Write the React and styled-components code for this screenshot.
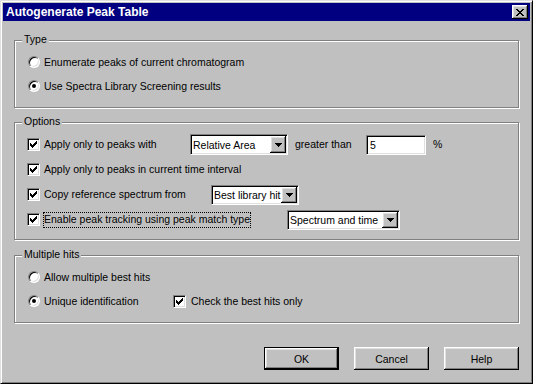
import styled, { createGlobalStyle } from 'styled-components'

const GlobalStyle = createGlobalStyle`
  html, body {
    margin: 0;
    background: #c0c0c0;
  }
  body {
    font-family: "Liberation Sans", Arial, sans-serif;
    font-size: 10.5px;
    color: #000;
  }
`

const raised = `
  box-shadow: inset -1px -1px #000, inset 1px 1px #fff,
    inset -2px -2px #808080, inset 2px 2px #dfdfdf;
`

const sunken = `
  border: 1px solid;
  border-color: #808080 #fff #fff #808080;
  box-shadow: inset 1px 1px #000, inset -1px -1px #dfdfdf;
`

const Dialog = styled.div`
  width: 533px;
  height: 384px;
  box-sizing: border-box;
  display: flex;
  flex-direction: column;
  padding: 2px;
  background: #c0c0c0;
  border: 1px solid;
  border-color: #dfdfdf #000 #000 #dfdfdf;
  box-shadow: inset 1px 1px #fff, inset -1px -1px #808080;
`

const TitleBar = styled.div`
  height: 18px;
  flex-shrink: 0;
  display: flex;
  align-items: center;
  justify-content: space-between;
  padding: 0 2px 0 3px;
  background: #000080;
  color: #fff;
  font-weight: bold;
  font-size: 12px;
`

const CloseButton = styled.div`
  width: 16px;
  height: 14px;
  display: flex;
  align-items: center;
  justify-content: center;
  background: #c0c0c0;
  ${raised}
`

const Body = styled.div`
  flex: 1;
  display: flex;
  flex-direction: column;
  padding: 19px 11px 0 11px;
`

const Group = styled.div`
  position: relative;
  border: 1px solid #808080;
  box-shadow: 1px 1px 0 #fff, inset 1px 1px 0 #fff;
  padding: 9px 12px ${(p) => p.$pb || 9}px;
  margin-top: ${(p) => p.$mt || 0}px;
`

const Legend = styled.span`
  position: absolute;
  top: -8px;
  left: 7px;
  padding: 0 2px;
  line-height: 13px;
  background: #c0c0c0;
`

const Row = styled.div`
  display: flex;
  align-items: center;
  height: ${(p) => p.$h || 24}px;
`

const Box = styled.div`
  width: 13px;
  height: 13px;
  box-sizing: border-box;
  flex-shrink: 0;
  display: flex;
  align-items: center;
  justify-content: center;
  margin-right: ${(p) => p.$gap || 4}px;
  background: #fff;
  ${sunken}
`

const Circle = styled.div`
  width: 12px;
  height: 12px;
  box-sizing: border-box;
  flex-shrink: 0;
  display: flex;
  align-items: center;
  justify-content: center;
  margin: 0 4px 0 1px;
  border-radius: 50%;
  background: #fff;
  ${sunken}
`

const Dot = styled.div`
  width: 4px;
  height: 4px;
  border-radius: 50%;
  background: #000;
`

const Caption = styled.span`
  flex-shrink: 0;
  width: ${(p) => (p.$width ? `${p.$width}px` : 'auto')};
  margin-left: ${(p) => p.$ml || 0}px;
  line-height: 13px;
  white-space: nowrap;
`

const Focus = styled.span`
  display: inline-block;
  margin-left: -1px;
  padding: 1px 1px 2px 1px;
  outline: 1px dotted #000;
  outline-offset: -1px;
`

const Select = styled.div`
  width: ${(p) => p.$w}px;
  height: ${(p) => p.$h || 20}px;
  box-sizing: border-box;
  flex-shrink: 0;
  display: flex;
  padding: 1px;
  background: #fff;
  ${sunken}
`

const SelectValue = styled.span`
  flex: 1;
  display: flex;
  align-items: center;
  padding-left: 1px;
  white-space: nowrap;
  overflow: hidden;
`

const DropButton = styled.div`
  width: 16px;
  flex-shrink: 0;
  display: flex;
  align-items: center;
  justify-content: center;
  background: #c0c0c0;
  ${raised}
`

const TextField = styled.div`
  width: 60px;
  height: 20px;
  box-sizing: border-box;
  flex-shrink: 0;
  display: flex;
  align-items: center;
  padding-left: 3px;
  background: #fff;
  ${sunken}
`

const ButtonRow = styled.div`
  display: flex;
  justify-content: flex-end;
  gap: 15px;
  margin-top: 24px;
`

const Button = styled.div`
  width: 75px;
  height: 23px;
  box-sizing: border-box;
  display: flex;
  align-items: center;
  justify-content: center;
  background: #c0c0c0;
  border: ${(p) => (p.$default ? '1px solid #000' : 'none')};
  ${raised}
`

// tiny pixel glyphs, drawn like the old bitmaps
const Pixels = ({ rows }) => (
  <svg
    width={rows[0].length}
    height={rows.length}
    shapeRendering="crispEdges"
    style={{ display: 'block' }}
  >
    {rows.map((r, y) =>
      r.split('').map((c, x) =>
        c === '#' ? <rect key={`${x}-${y}`} x={x} y={y} width="1" height="1" fill="#000" /> : null
      )
    )}
  </svg>
)

const closeGlyph = ['##....##', '.##..##.', '..####..', '...##...', '..####..', '.##..##.', '##....##']
const checkGlyph = ['......#', '.....##', '#...###', '##.###.', '#####..', '.###...', '..#....']
const arrowGlyph = ['#######', '.#####.', '..###..', '...#...']

const Check = ({ gap, checked = true }) => (
  <Box $gap={gap}>{checked && <Pixels rows={checkGlyph} />}</Box>
)

const Radio = ({ checked }) => <Circle>{checked && <Dot />}</Circle>

const Dropdown = ({ w, h, value }) => (
  <Select $w={w} $h={h}>
    <SelectValue>{value}</SelectValue>
    <DropButton>
      <Pixels rows={arrowGlyph} />
    </DropButton>
  </Select>
)

const App = () => {
  return (
    <>
      <GlobalStyle />
      <Dialog>
        <TitleBar>
          <span>Autogenerate Peak Table</span>
          <CloseButton>
            <Pixels rows={closeGlyph} />
          </CloseButton>
        </TitleBar>
        <Body>
          <Group>
            <Legend>Type</Legend>
            <Row>
              <Radio />
              <Caption>Enumerate peaks of current chromatogram</Caption>
            </Row>
            <Row>
              <Radio checked />
              <Caption>Use Spectra Library Screening results</Caption>
            </Row>
          </Group>

          <Group $mt={14} $pb={7}>
            <Legend>Options</Legend>
            <Row $h={25}>
              <Check />
              <Caption $width={146}>Apply only to peaks with</Caption>
              <Dropdown w={98} h={21} value="Relative Area" />
              <Caption $width={71} $ml={7}>greater than</Caption>
              <TextField>5</TextField>
              <Caption $ml={7}>%</Caption>
            </Row>
            <Row $h={25}>
              <Check />
              <Caption>Apply only to peaks in current time interval</Caption>
            </Row>
            <Row $h={25}>
              <Check />
              <Caption $width={167}>Copy reference spectrum from</Caption>
              <Dropdown w={88} value="Best library hit" />
            </Row>
            <Row $h={25}>
              <Check />
              <Caption $width={243}>
                <Focus>Enable peak tracking using peak match type</Focus>
              </Caption>
              <Dropdown w={113} value="Spectrum and time" />
            </Row>
          </Group>

          <Group $mt={15}>
            <Legend>Multiple hits</Legend>
            <Row>
              <Radio />
              <Caption>Allow multiple best hits</Caption>
            </Row>
            <Row>
              <Radio checked />
              <Caption $width={129}>Unique identification</Caption>
              <Check gap={5} />
              <Caption>Check the best hits only</Caption>
            </Row>
          </Group>

          <ButtonRow>
            <Button $default>OK</Button>
            <Button>Cancel</Button>
            <Button>Help</Button>
          </ButtonRow>
        </Body>
      </Dialog>
    </>
  )
}

export default App
